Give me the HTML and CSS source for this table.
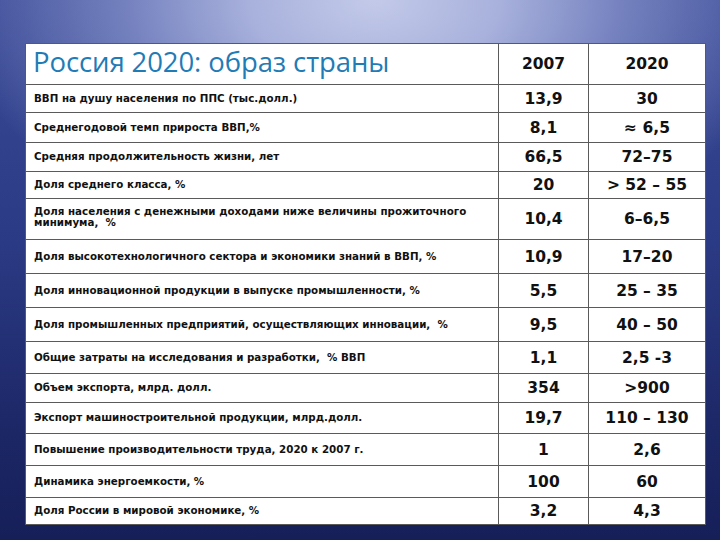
FILE: index.html
```html
<!DOCTYPE html>
<html lang="ru">
<head>
<meta charset="utf-8">
<title>Россия 2020: образ страны</title>
<link rel="stylesheet" href="styles.css">
</head>
<body>
<div class="slide">
  <table class="grid">
    <colgroup>
      <col class="c-label">
      <col class="c-val">
      <col class="c-val2">
    </colgroup>
    <tr class="r-head">
      <td class="title">Россия 2020: образ страны</td>
      <td class="val">2007</td>
      <td class="val">2020</td>
    </tr>
    <tr style="height:28px"><td class="lbl">ВВП на душу населения по ППС (тыс.долл.)</td><td class="val">13,9</td><td class="val">30</td></tr>
    <tr style="height:30px"><td class="lbl">Среднегодовой темп прироста ВВП,%</td><td class="val">8,1</td><td class="val">≈ 6,5</td></tr>
    <tr style="height:29px"><td class="lbl">Средняя продолжительность жизни, лет</td><td class="val">66,5</td><td class="val">72–75</td></tr>
    <tr style="height:27px"><td class="lbl">Доля среднего класса, %</td><td class="val">20</td><td class="val">&gt; 52 – 55</td></tr>
    <tr style="height:41px"><td class="lbl two">Доля населения с денежными доходами ниже величины прожиточного<br>минимума,&nbsp; %</td><td class="val">10,4</td><td class="val">6–6,5</td></tr>
    <tr style="height:34px"><td class="lbl">Доля высокотехнологичного сектора и экономики знаний в ВВП, %</td><td class="val">10,9</td><td class="val">17–20</td></tr>
    <tr style="height:34px"><td class="lbl">Доля инновационной продукции в выпуске промышленности, %</td><td class="val">5,5</td><td class="val">25 – 35</td></tr>
    <tr style="height:34px"><td class="lbl">Доля промышленных предприятий, осуществляющих инновации,&nbsp; %</td><td class="val">9,5</td><td class="val">40 – 50</td></tr>
    <tr style="height:32px"><td class="lbl">Общие затраты на исследования и разработки,&nbsp; % ВВП</td><td class="val">1,1</td><td class="val">2,5 -3</td></tr>
    <tr style="height:29px"><td class="lbl">Объем экспорта, млрд. долл.</td><td class="val">354</td><td class="val">&gt;900</td></tr>
    <tr style="height:31px"><td class="lbl">Экспорт машиностроительной продукции, млрд.долл.</td><td class="val">19,7</td><td class="val">110 – 130</td></tr>
    <tr style="height:32px"><td class="lbl">Повышение производительности труда, 2020 к 2007 г.</td><td class="val">1</td><td class="val">2,6</td></tr>
    <tr style="height:32px"><td class="lbl">Динамика энергоемкости, %</td><td class="val">100</td><td class="val">60</td></tr>
    <tr style="height:27px"><td class="lbl">Доля России в мировой экономике, %</td><td class="val">3,2</td><td class="val">4,3</td></tr>
  </table>
</div>
</body>
</html>
```

FILE: styles.css
```css
html, body {
  margin: 0;
  padding: 0;
}

body {
  width: 720px;
  height: 540px;
  overflow: hidden;
  background:
    radial-gradient(ellipse 420px 260px at 52% 0%, #c3cae9 0%, #a8b1dc 30%, #7683c0 58%, rgba(60, 76, 150, 0) 100%),
    linear-gradient(180deg, #3b4b97 0%, #2b3a84 45%, #1c2766 80%, #161f58 100%);
}

.slide {
  padding: 43px 15px 0 25px;
}

.grid {
  width: 680px;
  border-collapse: collapse;
  background: #ffffff;
  table-layout: fixed;
}

.c-label { width: 473px; }
.c-val { width: 90px; }
.c-val2 { width: 117px; }

.grid td {
  border: 1px solid #5a5a5a;
  padding: 0;
  vertical-align: middle;
}

.grid td + td {
  border-left-color: #2e2e2e;
}

.r-head {
  height: 41px;
}

.title {
  font-family: "Open Sans", "DejaVu Sans", sans-serif;
  font-size: 27.5px;
  line-height: 30px;
  font-weight: 400;
  color: #1f7cb6;
  padding: 0 0 5px 7px !important;
  white-space: nowrap;
  letter-spacing: -0.1px;
}

.lbl {
  font-family: "DejaVu Sans", "Liberation Sans", sans-serif;
  font-weight: bold;
  font-size: 10.3px;
  line-height: 12px;
  color: #111111;
  padding: 0 0 2px 8px !important;
  white-space: nowrap;
}

.lbl.two {
  line-height: 11px;
  padding-bottom: 5px !important;
}

.val {
  font-family: "DejaVu Sans", "Liberation Sans", sans-serif;
  font-weight: bold;
  font-size: 15.5px;
  line-height: 18px;
  color: #111111;
  text-align: center;
  white-space: nowrap;
}
```
